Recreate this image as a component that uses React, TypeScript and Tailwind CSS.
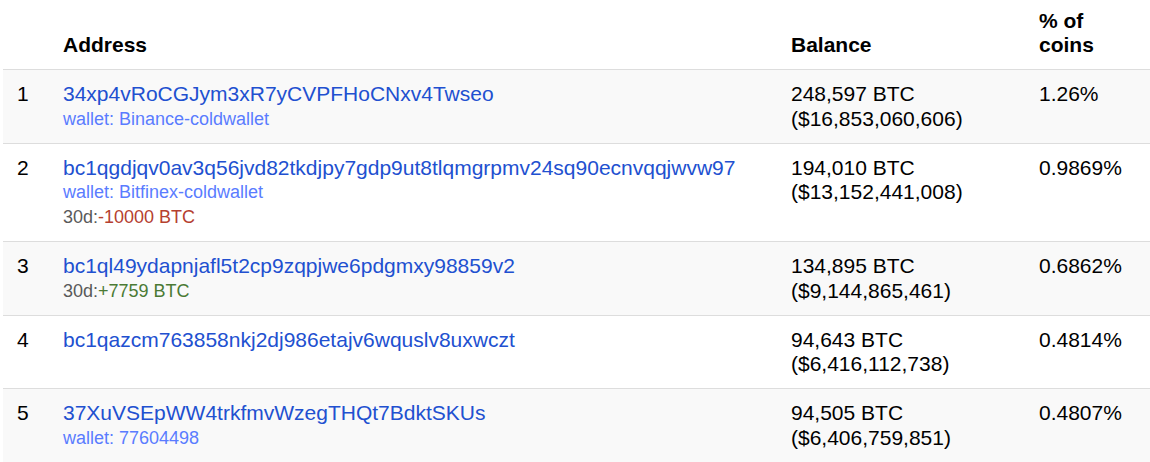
import React from "react";

type Row = {
    rank: number;
    address: string;
    wallet?: string;
    change?: { sign: "+" | "-"; text: string };
    btc: string;
    usd: string;
    pct: string;
};

const rows: Row[] = [
    {
        rank: 1,
        address: "34xp4vRoCGJym3xR7yCVPFHoCNxv4Twseo",
        wallet: "Binance-coldwallet",
        btc: "248,597 BTC",
        usd: "($16,853,060,606)",
        pct: "1.26%",
    },
    {
        rank: 2,
        address: "bc1qgdjqv0av3q56jvd82tkdjpy7gdp9ut8tlqmgrpmv24sq90ecnvqqjwvw97",
        wallet: "Bitfinex-coldwallet",
        change: { sign: "-", text: "-10000 BTC" },
        btc: "194,010 BTC",
        usd: "($13,152,441,008)",
        pct: "0.9869%",
    },
    {
        rank: 3,
        address: "bc1ql49ydapnjafl5t2cp9zqpjwe6pdgmxy98859v2",
        change: { sign: "+", text: "+7759 BTC" },
        btc: "134,895 BTC",
        usd: "($9,144,865,461)",
        pct: "0.6862%",
    },
    {
        rank: 4,
        address: "bc1qazcm763858nkj2dj986etajv6wquslv8uxwczt",
        btc: "94,643 BTC",
        usd: "($6,416,112,738)",
        pct: "0.4814%",
    },
    {
        rank: 5,
        address: "37XuVSEpWW4trkfmvWzegTHQt7BdktSKUs",
        wallet: "77604498",
        btc: "94,505 BTC",
        usd: "($6,406,759,851)",
        pct: "0.4807%",
    },
];

export default function App() {
    return (
        <div className="bg-white pl-[3px] font-['Liberation_Sans',Arial,sans-serif] text-[21px] leading-[24.2px] text-black">
            <table className="w-full border-collapse">
                <thead>
                    <tr className="border-b border-[#dddddd]">
                        <th className="w-[48px] pt-[9px] pb-3 pl-3 align-bottom"></th>
                        <th className="w-[728px] pt-[9px] pb-3 pl-3 text-left align-bottom font-bold">Address</th>
                        <th className="w-[248px] pt-[9px] pb-3 pl-3 text-left align-bottom font-bold">Balance</th>
                        <th className="pt-[9px] pb-3 pl-3 text-left align-bottom font-bold">
                            % of
                            <br />
                            coins
                        </th>
                    </tr>
                </thead>
                <tbody>
                    {rows.map((r) => (
                        <tr
                            key={r.rank}
                            className={`border-b border-[#dddddd] ${r.rank % 2 === 1 ? "bg-[#f9f9f9]" : "bg-white"}`}
                        >
                            <td className="pt-3 pb-3 pl-[14px] align-top">{r.rank}</td>
                            <td className="pt-3 pb-3 pl-3 align-top">
                                <div className="text-[#2150d0]">{r.address}</div>
                                {r.wallet && (
                                    <div className="text-[18px] leading-[24.5px] text-[#5a7cff]">wallet: {r.wallet}</div>
                                )}
                                {r.change && (
                                    <div className="text-[18px] leading-[24.5px] text-[#5a5a5a]">
                                        30d:
                                        <span className={r.change.sign === "-" ? "text-[#b5402f]" : "text-[#4b7a34]"}>
                                            {r.change.text}
                                        </span>
                                    </div>
                                )}
                            </td>
                            <td className="pt-3 pb-3 pl-3 align-top">
                                <div>{r.btc}</div>
                                <div>{r.usd}</div>
                            </td>
                            <td className="pt-3 pb-3 pl-3 align-top">{r.pct}</td>
                        </tr>
                    ))}
                </tbody>
            </table>
        </div>
    );
}
